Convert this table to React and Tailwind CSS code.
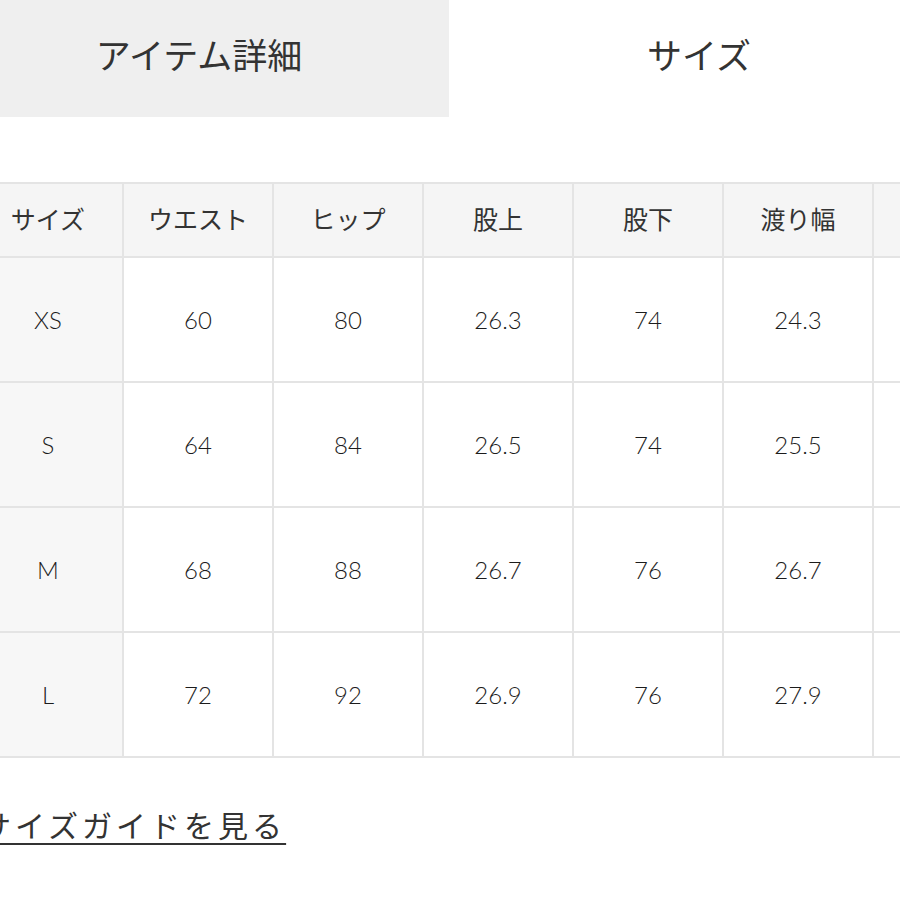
import React from 'react';

const headers = ['サイズ', 'ウエスト', 'ヒップ', '股上', '股下', '渡り幅', ''];

const rows = [
    ['XS', '60', '80', '26.3', '74', '24.3', ''],
    ['S', '64', '84', '26.5', '74', '25.5', ''],
    ['M', '68', '88', '26.7', '76', '26.7', ''],
    ['L', '72', '92', '26.9', '76', '27.9', ''],
];

export default function App() {
    return (
        <div
            className="w-[900px] h-[900px] overflow-hidden bg-white text-[#333]"
            style={{ fontFamily: "Lato, 'Noto Sans CJK JP', sans-serif" }}
        >
            {/* tabs */}
            <div className="flex ml-[-51px] w-[1000px]">
                <div className="w-[500px] h-[117px] pb-[6px] flex items-center justify-center bg-[#efefef] text-[35px]">
                    アイテム詳細
                </div>
                <div className="w-[500px] h-[117px] pb-[6px] flex items-center justify-center bg-white text-[35px]">
                    サイズ
                </div>
            </div>

            {/* size table */}
            <table className="mt-[65px] ml-[-28px] border-collapse table-fixed w-[1050px]">
                <thead>
                    <tr className="h-[74px]">
                        {headers.map((h, i) => (
                            <th
                                key={i}
                                className="w-[150px] border-2 border-[#e4e4e4] bg-[#f5f5f5] text-[25px] font-normal text-center"
                            >
                                {h}
                            </th>
                        ))}
                    </tr>
                </thead>
                <tbody>
                    {rows.map((r) => (
                        <tr key={r[0]} className="h-[125px]">
                            {r.map((v, i) => (
                                <td
                                    key={i}
                                    className={`border-2 border-[#e4e4e4] text-center text-[24px] font-light text-[#1c1c1c] ${i === 0 ? 'bg-[#f7f7f7]' : 'bg-white'}`}
                                >
                                    {v}
                                </td>
                            ))}
                        </tr>
                    ))}
                </tbody>
            </table>

            {/* guide link */}
            <div className="mt-[50px] ml-[-19px]">
                <a className="text-[30px] leading-[34px] tracking-[4px] underline underline-offset-[6px] decoration-2 text-[#333] whitespace-nowrap">
                    サイズガイドを見る
                </a>
            </div>
        </div>
    );
}
